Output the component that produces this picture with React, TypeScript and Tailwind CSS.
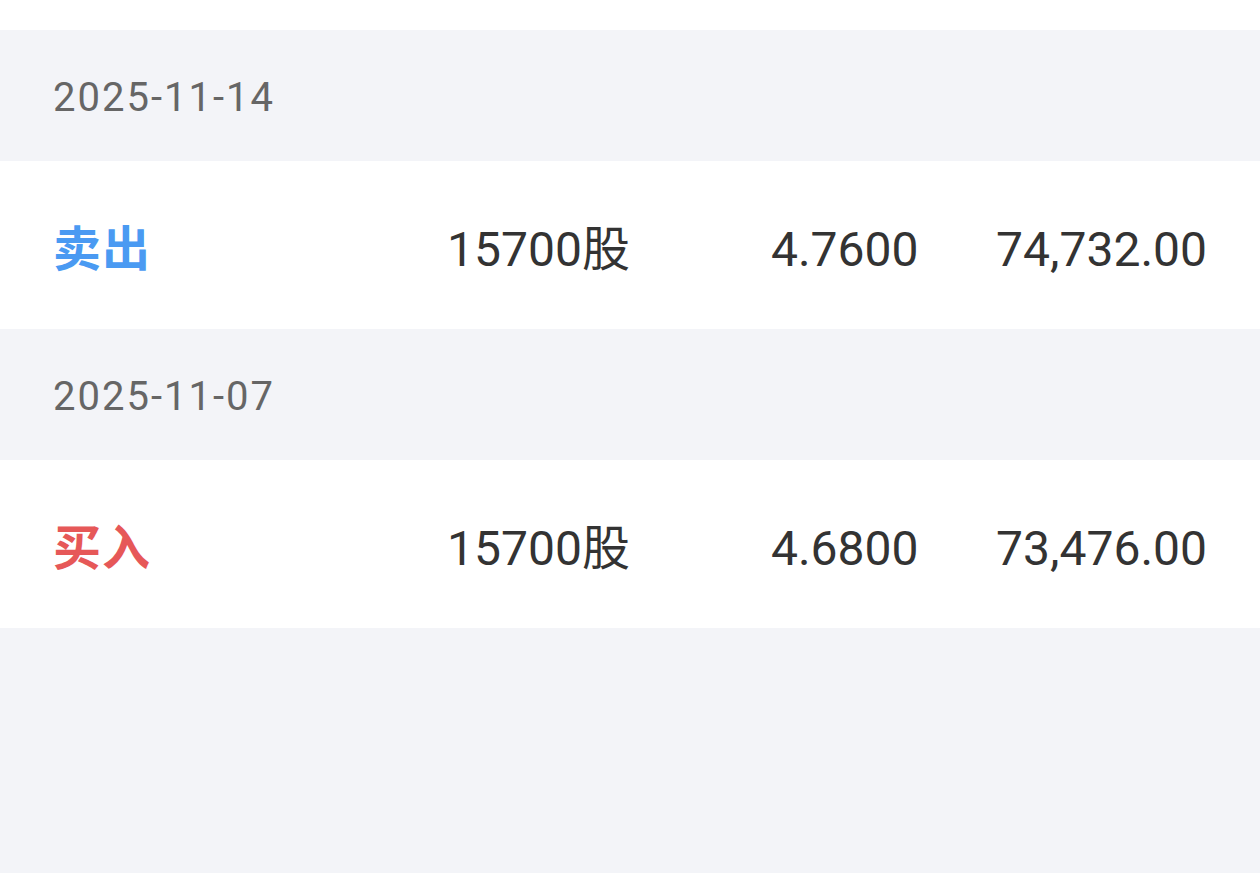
const trades = [
  { date: "2025-11-14", side: "卖出", qty: "15700股", price: "4.7600", amount: "74,732.00", sell: true },
  { date: "2025-11-07", side: "买入", qty: "15700股", price: "4.6800", amount: "73,476.00", sell: false },
];

const font = { fontFamily: "Roboto, 'Noto Sans CJK SC', sans-serif" };

export default function App() {
  return (
    <div className="min-h-[873px] bg-[#f3f4f8]" style={font}>
      <div className="h-[30px] bg-white" />
      {trades.map((t) => (
        <div key={t.date}>
          <div className="h-[130.5px] flex items-center px-[53px]">
            <span className="text-[40px] tracking-[2px] text-[#666666] leading-none pt-[6px]">{t.date}</span>
          </div>
          <div className="h-[168.5px] bg-white grid grid-cols-4 items-center px-[53px] text-[48px] leading-none text-[#333333]">
            <span
              className={
                "font-bold text-left tracking-[1px] " +
                (t.sell ? "text-[#4a9af2]" : "text-[#e65858]")
              }
              style={{ fontFamily: "'Noto Sans CJK SC', sans-serif" }}
            >
              {t.side}
            </span>
            <span className="text-right pt-[10px]">{t.qty}</span>
            <span className="text-right pt-[10px]">{t.price}</span>
            <span className="text-right pt-[10px]">{t.amount}</span>
          </div>
        </div>
      ))}
    </div>
  );
}
